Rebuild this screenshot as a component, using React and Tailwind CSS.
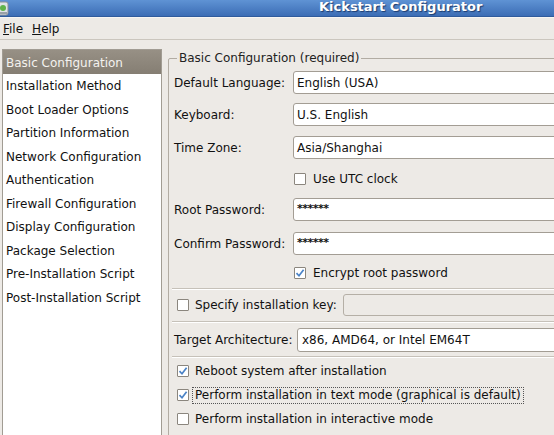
import React from 'react';

const menuItems = [
  'Basic Configuration',
  'Installation Method',
  'Boot Loader Options',
  'Partition Information',
  'Network Configuration',
  'Authentication',
  'Firewall Configuration',
  'Display Configuration',
  'Package Selection',
  'Pre-Installation Script',
  'Post-Installation Script',
];

function Check({ checked }) {
  return (
    <span className="w-[12px] h-[12px] shrink-0 border border-[#8b867e] bg-white rounded-[1px] flex items-center justify-center">
      {checked && (
        <svg width="10" height="10" viewBox="0 0 10 10">
          <path d="M1.5 5.2 L4 7.8 L8.6 1.8" fill="none" stroke="#4a82c6" strokeWidth="1.7" />
        </svg>
      )}
    </span>
  );
}

function Field({ children, className = '' }) {
  return (
    <div className={`h-[23px] w-[300px] border border-[#a39d94] rounded-[3px] bg-white flex items-center pl-[3px] ${className}`}>
      {children}
    </div>
  );
}

function Separator({ className = '' }) {
  return <div className={`h-[2px] mr-[-4px] ml-[-2px] border-t border-[#c6c1b9] border-b border-b-white ${className}`} />;
}

function App() {
  return (
    <div
      className="w-[554px] h-[435px] overflow-hidden bg-[#edeae6] text-[12px] text-[#111] flex flex-col"
      style={{ fontFamily: '"DejaVu Sans", "Liberation Sans", sans-serif' }}
    >
      {/* Title bar */}
      <div className="h-[17px] shrink-0 bg-gradient-to-b from-[#5f93d4] to-[#3c6db5] border-b border-[#2f5b9c] flex items-start relative">
        <svg className="absolute left-0 top-[1px]" width="9" height="15" viewBox="0 0 9 15">
          <rect x="-5" y="1" width="13" height="13" rx="2" fill="#dfe3e6" stroke="#8a9098" />
          <circle cx="3" cy="7" r="3" fill="#5fb34a" />
          <rect x="-3" y="11" width="10" height="2" fill="#9aa1a8" />
        </svg>
        <span
          className="pl-[319px] text-[13px] leading-[13px] font-bold text-white"
          style={{ textShadow: '1px 1px 1px #1d3c6e' }}
        >
          Kickstart Configurator
        </span>
      </div>

      {/* Menu bar */}
      <div className="h-[23px] shrink-0 flex items-center gap-[9px] pl-[3px] pt-[1px] border-b border-[#cbc6be] border-t border-t-[#f7f5f2]">
        <span><span className="underline">F</span>ile</span>
        <span><span className="underline">H</span>elp</span>
      </div>

      {/* Body */}
      <div className="flex items-start pt-[9px] flex-1 min-h-0">
        {/* Section list */}
        <div className="ml-[2px] w-[160px] h-[400px] shrink-0 bg-white border border-[#a19c93]">
          {menuItems.map((item, i) =>
            i === 0 ? (
              <div
                key={item}
                className="h-[24px] flex items-center pl-[3px] pt-[1px] text-[#f4f2ef] bg-gradient-to-b from-[#979085] to-[#857e73]"
              >
                {item}
              </div>
            ) : (
              <div key={item} className="h-[23.5px] flex items-center pl-[3px] pt-[1px]">
                {item}
              </div>
            )
          )}
        </div>

        {/* Basic configuration frame */}
        <fieldset className="ml-[6px] mt-[2px] w-[420px] h-[420px] shrink-0 border border-[#b2aca3] rounded-[2px] pl-[5px]">
          <legend className="ml-[3px] px-[2px] leading-[14px] text-[#222]">
            Basic Configuration (required)
          </legend>

          <div className="flex flex-col">
            <div className="mt-[6px] flex items-center">
              <span className="w-[119px] shrink-0">Default Language:</span>
              <Field>English (USA)</Field>
            </div>
            <div className="mt-[9px] flex items-center">
              <span className="w-[119px] shrink-0">Keyboard:</span>
              <Field>U.S. English</Field>
            </div>
            <div className="mt-[10px] flex items-center">
              <span className="w-[119px] shrink-0">Time Zone:</span>
              <Field>Asia/Shanghai</Field>
            </div>
            <div className="mt-[12px] h-[16px] flex items-center gap-[7px] pl-[120px]">
              <Check />
              <span>Use UTC clock</span>
            </div>
            <div className="mt-[11px] flex items-center">
              <span className="w-[119px] shrink-0">Root Password:</span>
              <Field className="text-[11px] font-bold tracking-[-0.5px]">******</Field>
            </div>
            <div className="mt-[11px] flex items-center">
              <span className="w-[119px] shrink-0">Confirm Password:</span>
              <Field className="text-[11px] font-bold tracking-[-0.5px]">******</Field>
            </div>
            <div className="mt-[10px] h-[16px] flex items-center gap-[7px] pl-[120px]">
              <Check checked />
              <span>Encrypt root password</span>
            </div>

            <Separator className="mt-[7px]" />

            <div className="mt-[4px] h-[22px] flex items-center">
              <div className="flex items-center gap-[6px] pl-[3px] w-[169px] shrink-0">
                <Check />
                <span>Specify installation key:</span>
              </div>
              <div className="h-[22px] w-[300px] border border-[#b5afa6] rounded-[3px] bg-[#edeae6]" />
            </div>

            <Separator className="mt-[5px]" />

            <div className="mt-[5px] flex items-center">
              <span className="w-[123px] shrink-0">Target Architecture:</span>
              <Field className="h-[24px] pl-[4px]">x86, AMD64, or Intel EM64T</Field>
            </div>

            <Separator className="mt-[4px]" />

            <div className="mt-[5px] h-[16px] flex items-center gap-[6px] pl-[3px]">
              <Check checked />
              <span>Reboot system after installation</span>
            </div>
            <div className="mt-[8px] h-[16px] flex items-center gap-[3px] pl-[3px]">
              <Check checked />
              <span className="border border-dotted border-[#555] px-[2px] leading-[15px]">
                Perform installation in text mode (graphical is default)
              </span>
            </div>
            <div className="mt-[8px] h-[16px] flex items-center gap-[6px] pl-[3px]">
              <Check />
              <span>Perform installation in interactive mode</span>
            </div>
          </div>
        </fieldset>
      </div>
    </div>
  );
}

export default App;
